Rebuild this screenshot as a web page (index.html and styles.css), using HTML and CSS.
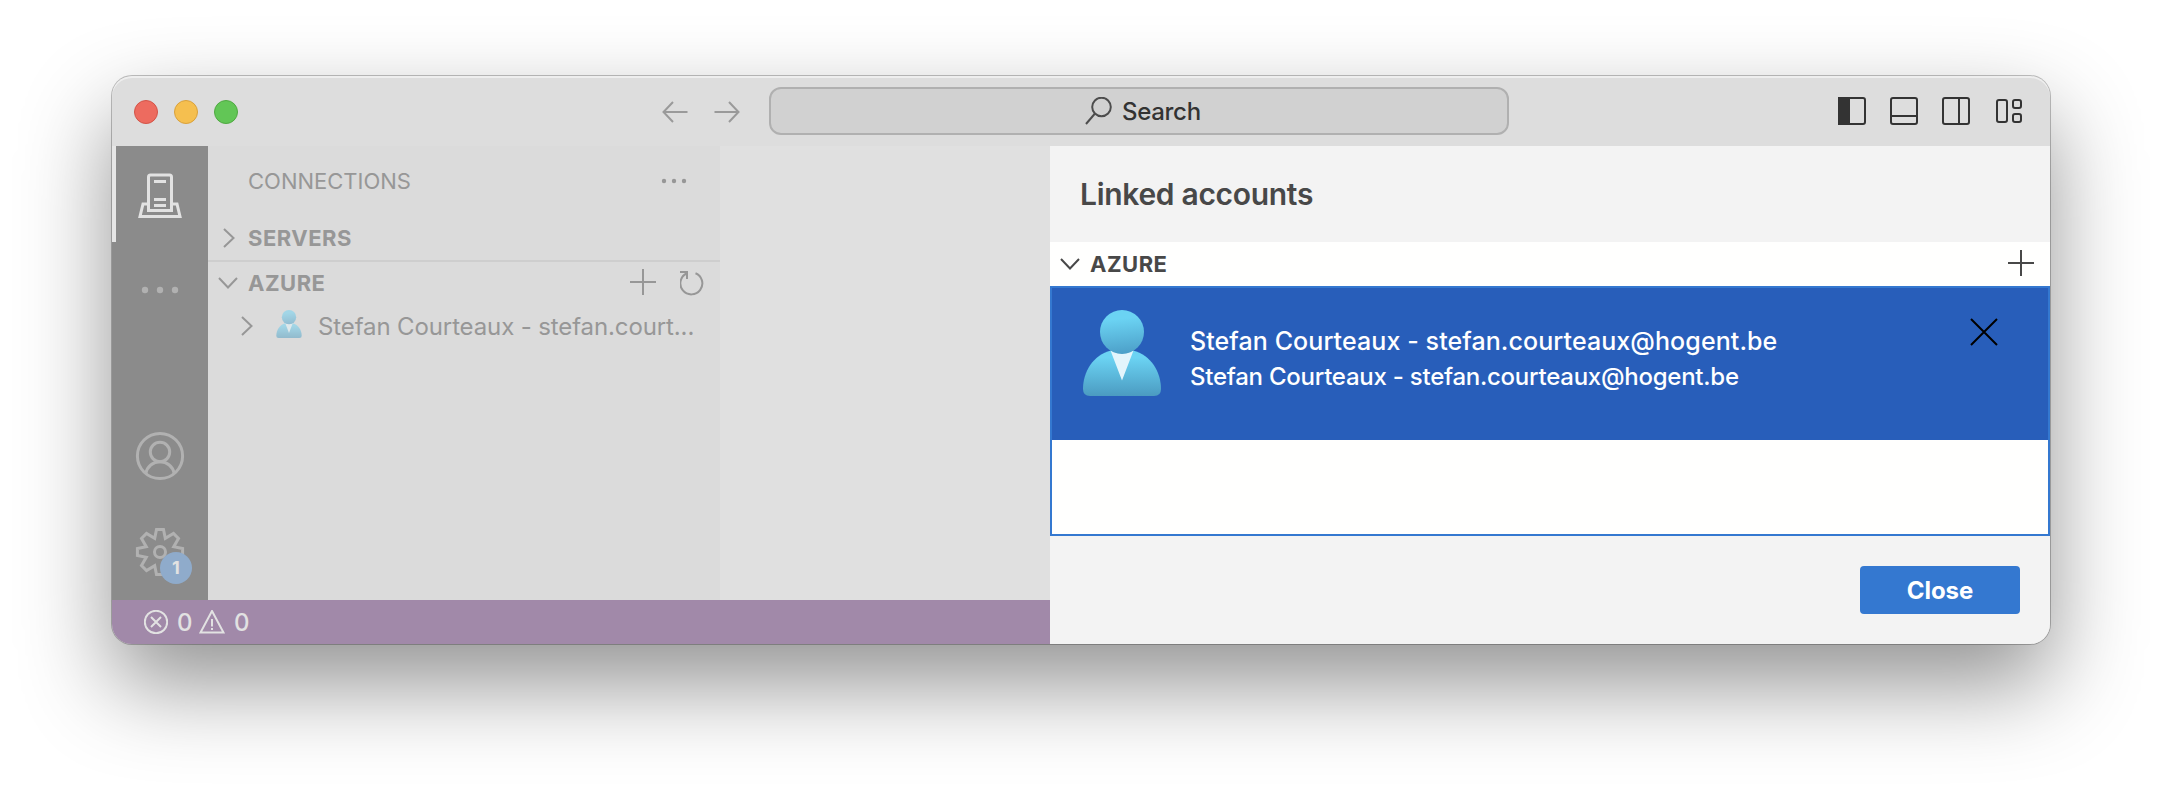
FILE: index.html
```
<!DOCTYPE html>
<html lang="en">
<head>
<meta charset="utf-8">
<title>Linked accounts</title>
<link rel="stylesheet" href="styles.css">
</head>
<body>
<svg class="defs" width="0" height="0" aria-hidden="true">
  <defs>
    <linearGradient id="head" x1="0.45" y1="0" x2="0.55" y2="1"><stop offset="0.2" stop-color="#6bd3f3"/><stop offset="1" stop-color="#4c9fc8"/></linearGradient>
    <linearGradient id="body" x1="0" y1="0" x2="0" y2="1"><stop offset="0.15" stop-color="#6bd3f3"/><stop offset="1" stop-color="#4b9bc1"/></linearGradient>
    <symbol id="person" viewBox="0 0 78 86">
      <path d="M28 40.500C10 45 0 62 0 79Q0 86 7 86H71Q78 86 78 79C78 62 68 45 50 40.500Z" fill="url(#body)"/>
      <path d="M27.500 40.500Q39 46 50.500 40.500L39 70.500Z" fill="#e3f5fc"/>
      <circle cx="39" cy="22" r="22" fill="url(#head)"/>
    </symbol>
  </defs>
</svg>
<div class="window">
  <header class="titlebar">
    <div class="lights"><i class="light red"></i><i class="light yellow"></i><i class="light green"></i></div>
    <div class="history">
      <svg width="26" height="22" viewBox="0 0 26 22"><path d="M11 1L1.500 11L11 21M1.500 11H25.500"/></svg>
      <svg width="26" height="22" viewBox="0 0 26 22"><path d="M15 1L24.500 11L15 21M24.500 11H.5"/></svg>
    </div>
    <div class="search">
      <svg width="27" height="28" viewBox="0 0 27 28"><circle cx="16.500" cy="10" r="9.300"/><path d="M10 16.500L1 27"/></svg>
      <span class="search-label">Search</span>
    </div>
    <div class="layouts">
      <svg width="28" height="28" viewBox="0 0 28 28"><rect x="1" y="1" width="26" height="26" rx="2"/><path d="M1 1H11V27H1Z" fill="#333"/></svg>
      <svg width="28" height="28" viewBox="0 0 28 28"><rect x="1" y="1" width="26" height="26" rx="2"/><path d="M1 19H27"/></svg>
      <svg width="28" height="28" viewBox="0 0 28 28"><rect x="1" y="1" width="26" height="26" rx="2"/><path d="M17 1V27"/></svg>
      <svg width="28" height="28" viewBox="0 0 28 28"><rect x="3" y="3" width="10" height="22" rx="2"/><rect x="19" y="3" width="8" height="8" rx="2"/><rect x="19" y="17" width="8" height="8" rx="2"/></svg>
    </div>
  </header>
  <div class="content">
    <div class="workbench">
      <div class="main">
        <nav class="activity">
          <div class="act active"><svg width="44" height="46" viewBox="0 0 44 46"><path d="M10.500 31H5L2 43.500H42L39 31H33.500"/><path d="M10.500 37.500V4Q10.500 2 12.500 2H31.500Q33.500 2 33.500 4V37.500Z"/><path d="M16 8.500H28M16 26.500H28M16 32.500H28"/></svg></div>
          <div class="act"><svg width="38" height="8" viewBox="0 0 38 8"><g fill="#b1b1b1" stroke="none"><circle cx="4" cy="4" r="3.200"/><circle cx="19" cy="4" r="3.200"/><circle cx="34" cy="4" r="3.200"/></g></svg></div>
          <div class="act account"><svg width="50" height="50" viewBox="0 0 50 50"><circle cx="25" cy="25" r="22.600"/><circle cx="25" cy="21" r="9.700"/><path d="M10.800 42.500C12 35.500 18 30.700 25 30.700S38 35.500 39.200 42.500"/></svg></div>
          <div class="act gear"><svg width="50" height="50" viewBox="0 0 50 50"><path d="M21.500 2.400H28.500L30.300 11.300L38.500 6.500L43.500 11.500L38.700 19.700L47.600 21.500V28.500L38.700 30.300L43.500 38.500L38.500 43.500L30.300 38.700L28.500 47.600H21.500L19.700 38.700L11.500 43.500L6.500 38.500L11.300 30.300L2.400 28.500V21.500L11.300 19.700L6.500 11.500L11.500 6.500L19.700 11.300Z"/><circle cx="25" cy="25" r="5.500"/></svg><span class="badge">1</span></div>
        </nav>
        <aside class="sidebar">
          <div class="side-title"><span class="t-conn">CONNECTIONS</span><svg width="26" height="6" viewBox="0 0 26 6"><g fill="#979797" stroke="none"><circle cx="3" cy="3" r="2.200"/><circle cx="13" cy="3" r="2.200"/><circle cx="23" cy="3" r="2.200"/></g></svg></div>
          <div class="section servers"><span class="chev"><svg width="12" height="20" viewBox="0 0 12 20"><path d="M1 1L10.500 10L1 19"/></svg></span><b class="t-head">SERVERS</b></div>
          <div class="section azure"><span class="chev"><svg width="20" height="12" viewBox="0 0 20 12"><path d="M1 1L10 10.500L19 1"/></svg></span><b class="t-head">AZURE</b>
            <span class="actions"><svg width="26" height="26" viewBox="0 0 26 26"><path d="M13 0V26M0 13H26"/></svg><svg width="24" height="26" viewBox="0 0 24 26"><path d="M0 2H7V9M6.500 3.500A11 11 0 1 0 15.500 3.200"/></svg></span></div>
          <div class="tree"><svg class="tree-chev" width="12" height="20" viewBox="0 0 12 20"><path d="M1 1L10.500 10L1 19"/></svg><svg class="tree-person" width="26" height="28"><use href="#person"/></svg><span class="t-tree">Stefan Courteaux - stefan.court...</span></div>
        </aside>
        <div class="editor"></div>
      </div>
      <footer class="status">
        <svg width="24" height="24" viewBox="0 0 24 24"><circle cx="12" cy="12" r="11.200"/><path d="M7 7L17 17M17 7L7 17"/></svg><span>0</span>
        <svg class="warn" width="26" height="24" viewBox="0 0 26 24"><path d="M13 1L24.500 22.500H1.500Z"/><path d="M13 9V16.500M13 18V20"/></svg><span>0</span>
      </footer>
    </div>
    <section class="panel">
      <h1 class="panel-title"><span>Linked accounts</span></h1>
      <div class="panel-sec"><svg width="20" height="12" viewBox="0 0 20 12"><path d="M1 1L10 10.500L19 1"/></svg><b class="t-head">AZURE</b><svg class="add" width="26" height="26" viewBox="0 0 26 26"><path d="M13 0V26M0 13H26"/></svg></div>
      <div class="list">
        <div class="row">
          <svg class="avatar" width="78" height="86"><use href="#person"/></svg>
          <div class="names"><span class="name">Stefan Courteaux - stefan.courteaux@hogent.be</span><span class="sub">Stefan Courteaux - stefan.courteaux@hogent.be</span></div>
          <svg class="remove" width="28" height="28" viewBox="0 0 28 28"><path d="M1 1L27 27M27 1L1 27"/></svg>
        </div>
      </div>
      <div class="panel-foot"><button class="close"><span>Close</span></button></div>
    </section>
  </div>
</div>
</body>
</html>
```
FILE: styles.css
```
* { box-sizing: border-box; }
html, body { margin: 0; height: 792px; overflow: hidden; background: #fff; }
body { font-family: Inter, "Liberation Sans", sans-serif; padding: 76px 112px; }
svg { display: block; flex: none; fill: none; stroke: currentColor; stroke-width: 2; }
svg use { stroke: none; }
.defs { position: absolute; }
.window { width: 1938px; height: 568px; border-radius: 20px; overflow: hidden; display: flex; flex-direction: column; background: #ddd; box-shadow: 0 0 0 1px rgba(0,0,0,.24), 0 40px 90px rgba(0,0,0,.43); }
.titlebar { height: 70px; flex: none; display: flex; align-items: center; padding: 0 28px 0 22px; box-shadow: inset 0 2px 0 #eee; border-radius: 20px 20px 0 0; }
.lights { display: flex; gap: 16px; margin-top: 2px; }
.light { width: 24px; height: 24px; border-radius: 50%; border: 1px solid; }
.red { background: #ed6b5f; border-color: #d35448; }
.yellow { background: #f5bf4f; border-color: #d9a13c; }
.green { background: #62c656; border-color: #50a942; }
.history { display: flex; gap: 26px; margin-left: 424px; margin-top: 2px; color: #9a9a9a; }
.search { width: 740px; height: 48px; margin-left: 29px; border: 2px solid #b0b0b0; border-radius: 12px; background: #d1d1d1; display: flex; align-items: center; padding-left: 314px; color: #4d4d4d; }
.search-label { margin-left: 10px; font-size: 24px; font-weight: 500; letter-spacing: -.3px; color: #333; }
.layouts { display: flex; gap: 24px; margin-left: auto; color: #333; }
.content { flex: 1; display: flex; min-height: 0; }
.workbench { width: 938px; display: flex; flex-direction: column; }
.main { flex: 1; display: flex; }
.activity { width: 96px; background: #8b8b8b; display: flex; flex-direction: column; color: #b1b1b1; }
.act { position: relative; height: 96px; display: grid; place-items: center; }
.act svg { stroke-width: 3; }
.active { color: #e2e2e2; border-left: 4px solid #e6e6e6; padding: 4px 4px 0 0; }
.account { margin-top: 70px; }
.badge { position: absolute; left: 48px; top: 48px; width: 32px; height: 32px; border-radius: 50%; background: #8fabcb; color: #e2e2e2; font: bold 18px/32px Inter, sans-serif; text-align: center; }
.sidebar { width: 512px; background: #dbdbdb; color: #979797; }
.side-title { height: 70px; display: flex; align-items: center; justify-content: space-between; padding: 0 33px 0 40px; font-size: 22px; }
.section { height: 44px; display: flex; align-items: center; }
.azure { border-top: 2px solid #cecece; }
.chev { width: 40px; padding-left: 10px; }
.servers .chev { padding-left: 15px; }
.t-head { font-size: 22px; letter-spacing: .5px; }
.actions { display: flex; gap: 24px; margin: -2px 0 0 auto; padding-right: 16px; }
.actions svg + svg { margin-top: 1px; }
.tree { display: flex; align-items: center; height: 44px; padding-left: 33px; }
.tree-person { margin: -4px 0 0 23px; opacity: .5; }
.t-tree { margin-left: 16px; font-size: 24px; letter-spacing: -.12px; }
.editor { flex: 1; background: #e0e0e0; }
.status { height: 44px; flex: none; background: #a189a9; color: #e2e2e2; display: flex; align-items: center; padding-left: 32px; font-size: 24px; font-weight: 500; }
.status span { width: 14px; margin-left: 9px; }
.status .warn { margin-left: 8px; }
.panel { width: 1000px; background: #f3f3f3; display: flex; flex-direction: column; color: #484848; }
.panel-title { height: 96px; margin: 0; padding-left: 30px; font-size: 30px; font-weight: 600; line-height: 96px; letter-spacing: -.3px; }
.panel-sec { height: 44px; background: #fffffe; display: flex; align-items: center; padding: 0 16px 0 10px; }
.panel-sec .t-head { margin-left: 10px; }
.add { margin: -2px 0 0 auto; }
.list { height: 250px; border: 2px solid #3478d0; background: #fffffe; }
.row { height: 152px; background: #285eba; display: flex; color: #fff; }
.avatar { margin: 22px 0 0 31px; }
.names { margin: 34px 0 0 29px; display: flex; flex-direction: column; align-items: flex-start; font-weight: 500; }
.name { font-size: 25px; line-height: 38px; letter-spacing: .09px; }
.sub { font-size: 24px; line-height: 34px; letter-spacing: -.25px; }
.remove { margin: 30px 50px 0 auto; color: #000; }
.panel-foot { flex: 1; display: flex; align-items: center; justify-content: flex-end; padding-right: 30px; }
.close { width: 160px; height: 48px; border: 0; border-radius: 4px; background: #3478d0; color: #fff; font: bold 24px Inter, "Liberation Sans", sans-serif; }
```
